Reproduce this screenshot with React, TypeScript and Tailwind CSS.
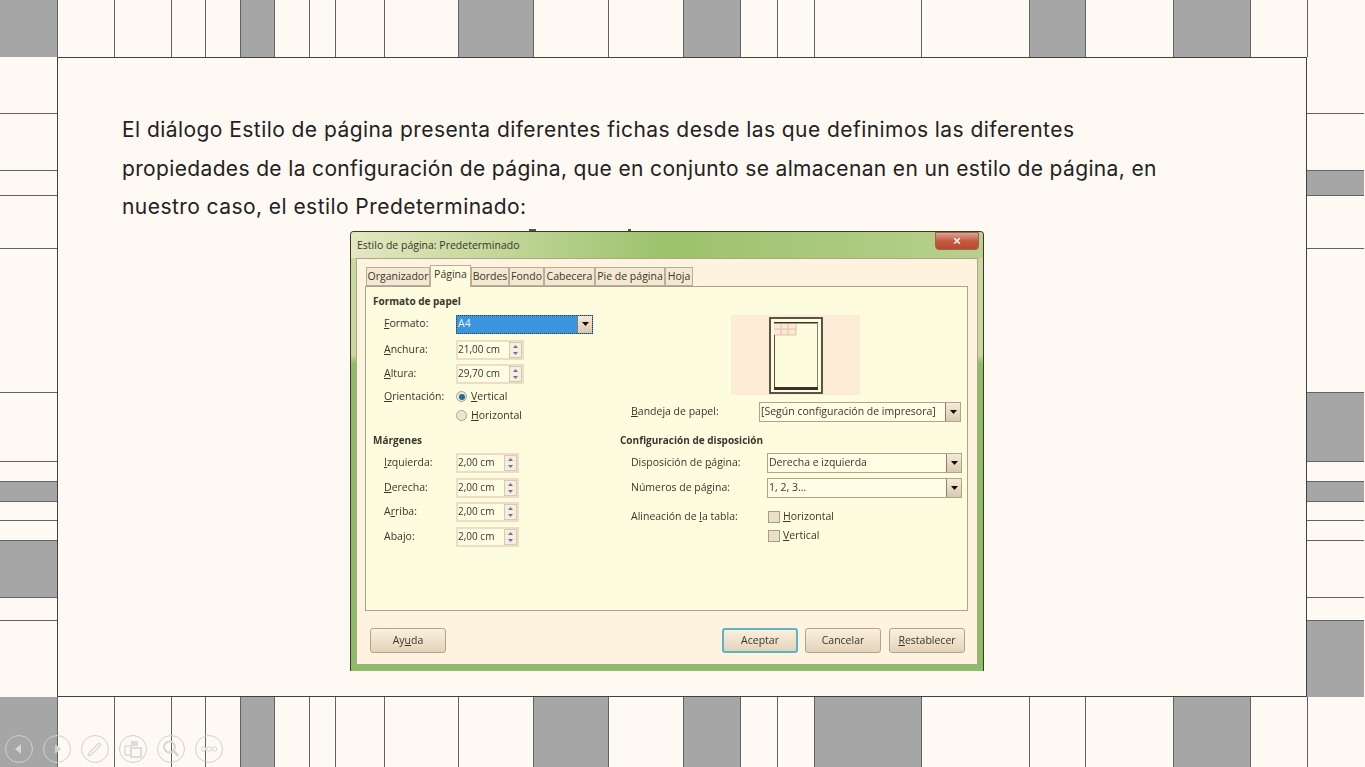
import type { ReactNode } from "react";

const topGray = [0, 5, 10, 13, 18, 20];
const bottomGray = [0, 5, 11, 13, 16, 20];
const columns = Array.from({ length: 23 }, (_, i) => i);
const leftRows = [
  false, false, false, false, false, false, false, true, false, false, true, false, false,
];
const rightRows = [
  false, false, true, false, false, true, false, true, false, false, false, false, true,
];

function Band({ gray }: { gray: number[] }) {
  return (
    <div className="grid h-full grid-cols-[58px_57px_57px_34px_35px_34px_35px_26px_49px_74px_75px_75px_75px_57px_37px_37px_107px_108px_56px_88px_77px_57px_57px]">
      {columns.map((c) => (
        <div
          key={c}
          className={`border-r border-[#5f6464] last:border-r-0 ${
            gray.includes(c) ? "bg-[#a6a6a6]" : ""
          }`}
        />
      ))}
    </div>
  );
}

function SideColumn({ rows }: { rows: boolean[] }) {
  return (
    <div className="grid h-full w-[57px] shrink-0 grid-rows-[57px_57px_25px_53px_144px_69px_20px_20px_19px_20px_57px_23px_76px]">
      {rows.map((gray, i) => (
        <div
          key={i}
          className={`border-b border-[#5f6464] last:border-b-0 ${gray ? "bg-[#a6a6a6]" : ""}`}
        />
      ))}
    </div>
  );
}

function Arrow() {
  return (
    <span className="flex h-full w-[15px] shrink-0 items-center justify-center border-l border-[#8d8068] bg-gradient-to-b from-[#f6ebd8] to-[#d9c8b0]">
      <svg width="7" height="4" viewBox="0 0 7 4">
        <path d="M0 0h7L3.5 4z" fill="#0f0d08" />
      </svg>
    </span>
  );
}

function Select({ className, children }: { className: string; children: ReactNode }) {
  return (
    <div
      className={`flex items-center justify-between border border-[#b0a48c] bg-[#fffde4] pl-[1px] ${className}`}
    >
      <span className="whitespace-nowrap">{children}</span>
      <Arrow />
    </div>
  );
}

function Spin({ value, className }: { value: string; className: string }) {
  return (
    <div
      className={`flex h-[20px] items-center justify-between border-2 border-[#efdcc4] bg-[#fffde4] text-[10px] ${className}`}
    >
      <span className="whitespace-nowrap">{value}</span>
      <span className="flex h-[16px] w-[13px] flex-col items-center justify-around border border-[#d8c8b4] bg-[#f8eedc]">
        <svg width="5" height="3" viewBox="0 0 5 3">
          <path d="M0 3h5L2.5 0z" fill="#6a70a8" />
        </svg>
        <svg width="5" height="3" viewBox="0 0 5 3">
          <path d="M0 0h5L2.5 3z" fill="#6a70a8" />
        </svg>
      </span>
    </div>
  );
}

function Label({ className, children }: { className: string; children: ReactNode }) {
  return <span className={`shrink-0 whitespace-nowrap ${className}`}>{children}</span>;
}

function Radio({ checked }: { checked?: boolean }) {
  return (
    <span className="flex size-[11px] items-center justify-center rounded-full border border-[#aaa28e] bg-[#ece6d2]">
      {checked && <span className="size-[6px] rounded-full bg-[#1f6d90]" />}
    </span>
  );
}

function Check() {
  return <span className="size-[12px] shrink-0 border border-[#a89c88] bg-[#eadfc9]" />;
}

function Button({ children, active }: { children: ReactNode; active?: boolean }) {
  return (
    <div
      className={`flex h-[25px] w-[76px] items-center justify-center rounded-[3px] bg-gradient-to-b from-[#fbf0de] to-[#e4d3ba] pt-[2px] text-[10.5px] ${
        active ? "border-2 border-[#5fb3c4]" : "border border-[#b0a68f]"
      }`}
    >
      {children}
    </div>
  );
}

function Tab({
  className,
  active,
  children,
}: {
  className: string;
  active?: boolean;
  children: ReactNode;
}) {
  return (
    <div
      className={`flex items-center justify-center self-end whitespace-nowrap border border-[#b9ae96] ${className} ${
        active
          ? "z-10 -mb-[1px] h-[22px] border-b-0 bg-[#fefcdf] pb-[2px]"
          : "h-[19px] bg-[#f4e8d2] pt-[2px]"
      }`}
    >
      {children}
    </div>
  );
}

function PaperDialog() {
  return (
    <div className="relative ml-[292px] mt-[3px] w-[634px]">
      <span className="absolute -top-[2px] left-[179px] h-[2px] w-[7px] bg-[#55524a]" />
      <span className="absolute -top-[2px] left-[278px] h-[2px] w-[3px] bg-[#55524a]" />
      <div className="flex h-[440px] flex-col overflow-hidden rounded-t-[4px] border-t border-l border-r border-[#3b3a25] bg-gradient-to-b from-[#c9d8a0] from-28% to-[#8dbd68] to-30% font-['Open_Sans',sans-serif] text-[10.5px] text-[#38362a] blur-[0.5px]">
        <div className="relative flex h-[26px] shrink-0 items-center bg-gradient-to-r from-[#e4e8c0] via-[#9cc26c] via-50% to-[#b8d08c] pl-[6px] pt-[3px]">
          Estilo de página: Predeterminado
          <span className="absolute right-[4px] top-0 flex h-[18px] w-[44px] items-center justify-center rounded-b-[4px] border border-[#a0604c] bg-gradient-to-b from-[#d8a494] via-[#c65a3c] to-[#b84a34] text-[15px] font-bold leading-none text-[#eeeeee]">
            ×
          </span>
        </div>
        <div className="mx-[5px] mb-[6px] flex grow flex-col border border-[#a8a888] bg-[#fdf3df] pl-[8px] pr-[9px]">
          <div className="flex h-[27px] shrink-0 pl-[1px]">
            <Tab className="w-[64px]">Organizador</Tab>
            <Tab className="w-[41px]" active>
              Página
            </Tab>
            <Tab className="w-[38px]">Bordes</Tab>
            <Tab className="w-[35px]">Fondo</Tab>
            <Tab className="w-[51px]">Cabecera</Tab>
            <Tab className="w-[70px]">Pie de página</Tab>
            <Tab className="w-[28px]">Hoja</Tab>
          </div>
          <div className="flex h-[325px] shrink-0 border border-[#a8a48c] bg-[#fefcdf]">
            <div className="flex w-[254px] shrink-0 flex-col pl-[7px] pt-[5px]">
              <div className="flex h-[20px] items-center text-[10px] font-bold">Formato de papel</div>
              <div className="mt-[3px] flex h-[19px] items-center pl-[11px]">
                <Label className="w-[72px]">
                  <u>F</u>ormato:
                </Label>
                <div className="flex h-full w-[137px] items-center justify-between border border-dotted border-[#3c3a30] bg-[#3a94de] pl-[1px] text-[#e8f2f8]">
                  A4
                  <Arrow />
                </div>
              </div>
              <div className="mt-[6px] flex h-[20px] items-center pl-[11px]">
                <Label className="w-[72px]">
                  <u>A</u>nchura:
                </Label>
                <Spin value="21,00 cm" className="w-[68px]" />
              </div>
              <div className="mt-[4px] flex h-[20px] items-center pl-[11px]">
                <Label className="w-[72px]">
                  <u>A</u>ltura:
                </Label>
                <Spin value="29,70 cm" className="w-[68px]" />
              </div>
              <div className="mt-[4px] flex h-[18px] items-center pl-[11px]">
                <Label className="w-[72px]">
                  <u>O</u>rientación:
                </Label>
                <span className="flex items-center gap-[4px]">
                  <Radio checked />
                  <span>
                    <u>V</u>ertical
                  </span>
                </span>
              </div>
              <div className="mt-[1px] flex h-[18px] items-center pl-[83px]">
                <span className="flex items-center gap-[4px]">
                  <Radio />
                  <span>
                    <u>H</u>orizontal
                  </span>
                </span>
              </div>
              <div className="mt-[6px] flex h-[20px] items-center text-[10px] font-bold">Márgenes</div>
              <div className="mt-[2px] flex h-[20px] items-center pl-[11px]">
                <Label className="w-[72px]">
                  <u>I</u>zquierda:
                </Label>
                <Spin value="2,00 cm" className="w-[63px]" />
              </div>
              <div className="mt-[5px] flex h-[20px] items-center pl-[11px]">
                <Label className="w-[72px]">
                  <u>D</u>erecha:
                </Label>
                <Spin value="2,00 cm" className="w-[63px]" />
              </div>
              <div className="mt-[4px] flex h-[20px] items-center pl-[11px]">
                <Label className="w-[72px]">
                  A<u>r</u>riba:
                </Label>
                <Spin value="2,00 cm" className="w-[63px]" />
              </div>
              <div className="mt-[5px] flex h-[20px] items-center pl-[11px]">
                <Label className="w-[72px]">
                  Aba<u>j</u>o:
                </Label>
                <Spin value="2,00 cm" className="w-[63px]" />
              </div>
            </div>
            <div className="flex grow flex-col pt-[28px]">
              <div className="ml-[111px] flex h-[80px] w-[129px] justify-center bg-[#fdecd6] pt-[2px]">
                <div className="flex h-[77px] w-[54px] flex-col border-2 border-[#5c5246] bg-[#fefcdf] px-[3px] pt-[3px]">
                  <svg width="44" height="70" viewBox="0 0 44 70">
                    <path d="M0 0.5h44" stroke="#3a3226" strokeWidth="2" />
                    <path d="M0 2h22v11H0z" fill="#fbe9d4" />
                    <path
                      d="M0 7h22M7 2v11M14 2v11M22 2v11M0 13h22"
                      stroke="#e0bfa8"
                      strokeWidth="1"
                      fill="none"
                    />
                    <path d="M0.5 13v54" stroke="#5c5246" strokeWidth="1" />
                    <path d="M43.5 2v66" stroke="#8a8072" strokeWidth="1" />
                    <path d="M0 66.5h44" stroke="#3a3226" strokeWidth="3" />
                  </svg>
                </div>
              </div>
              <div className="mt-[7px] flex h-[20px] items-center pl-[11px]">
                <Label className="w-[128px]">
                  <u>B</u>andeja de papel:
                </Label>
                <Select className="h-full w-[202px]">[Según configuración de impresora]</Select>
              </div>
              <div className="mt-[9px] flex h-[20px] items-center text-[10px] font-bold">
                Configuración de disposición
              </div>
              <div className="mt-[2px] flex h-[20px] items-center pl-[11px]">
                <Label className="w-[136px]">
                  Disposición de <u>p</u>ágina:
                </Label>
                <Select className="h-full w-[195px]">Derecha e izquierda</Select>
              </div>
              <div className="mt-[5px] flex h-[20px] items-center pl-[11px]">
                <Label className="w-[136px]">Números de página:</Label>
                <Select className="h-full w-[195px]">1, 2, 3...</Select>
              </div>
              <div className="mt-[10px] flex h-[19px] items-center pl-[11px]">
                <Label className="w-[137px]">
                  Alineación de <u>l</u>a tabla:
                </Label>
                <Check />
                <span className="ml-[3px]">
                  <u>H</u>orizontal
                </span>
              </div>
              <div className="flex h-[19px] items-center pl-[148px]">
                <Check />
                <span className="ml-[3px]">
                  <u>V</u>ertical
                </span>
              </div>
            </div>
          </div>
          <div className="mt-[17px] flex gap-[7px] pl-[5px] pr-[3px]">
            <div className="mr-auto">
              <Button>
                <span>
                  Ay<u>u</u>da
                </span>
              </Button>
            </div>
            <Button active>Aceptar</Button>
            <Button>Cancelar</Button>
            <div className="ml-[1px]">
              <Button>
                <span>
                  <u>R</u>establecer
                </span>
              </Button>
            </div>
          </div>
        </div>
      </div>
    </div>
  );
}

function CircleIcon({ children }: { children: ReactNode }) {
  return (
    <svg width="28" height="28" viewBox="0 0 28 28" fill="none">
      <circle cx="14" cy="14" r="13.5" stroke="#cfcfcf" strokeWidth="1" />
      {children}
    </svg>
  );
}

function SlideControls() {
  return (
    <div className="absolute bottom-[4px] left-[5px] flex gap-[10px]">
      <CircleIcon>
        <path d="M16 9v10l-6-5z" fill="#d6d6d6" />
      </CircleIcon>
      <CircleIcon>
        <path d="M12.5 10v8l5-4z" fill="#d0d0d0" stroke="#d0d0d0" />
      </CircleIcon>
      <CircleIcon>
        <path d="M7 21l1-3L18 8l2 2L10 20z" stroke="#d6d6d6" strokeWidth="1.2" strokeLinejoin="round" />
      </CircleIcon>
      <CircleIcon>
        <rect x="6" y="11" width="6" height="9" stroke="#dcdcdc" strokeWidth="1.5" />
        <rect x="12" y="6" width="7" height="5" fill="#dcdcdc" />
        <rect x="12" y="13" width="10" height="9" stroke="#dcdcdc" strokeWidth="2" />
      </CircleIcon>
      <CircleIcon>
        <circle cx="12.5" cy="12" r="5.5" stroke="#d6d6d6" strokeWidth="2" />
        <path d="M16.5 16l5 5" stroke="#d6d6d6" strokeWidth="2.5" />
      </CircleIcon>
      <CircleIcon>
        <circle cx="8.5" cy="14" r="2.2" stroke="#d6d6d6" />
        <circle cx="14" cy="14" r="2.2" stroke="#d6d6d6" />
        <circle cx="19.5" cy="14" r="2.2" stroke="#d6d6d6" />
      </CircleIcon>
    </div>
  );
}

export default function App() {
  return (
    <div className="relative flex h-[767px] w-[1365px] flex-col overflow-hidden bg-[#fff9f3]">
      <div className="h-[57px] shrink-0">
        <Band gray={topGray} />
      </div>
      <div className="flex h-[640px] shrink-0">
        <SideColumn rows={leftRows} />
        <div className="w-[1250px] shrink-0 border border-[#3f4242]">
          <p className="pl-[64px] pt-[53px] font-['Inter',sans-serif] text-[21px] leading-[38.5px] tracking-[0.44px] text-[#222222]">
            <span className="block whitespace-nowrap">
              El diálogo Estilo de página presenta diferentes fichas desde las que definimos las diferentes
            </span>
            <span className="block whitespace-nowrap tracking-[0.35px]">
              propiedades de la configuración de página, que en conjunto se almacenan en un estilo de página, en
            </span>
            <span className="block whitespace-nowrap">nuestro caso, el estilo Predeterminado:</span>
          </p>
          <div className="pt-[1px]">
            <PaperDialog />
          </div>
        </div>
        <SideColumn rows={rightRows} />
      </div>
      <div className="h-[70px] shrink-0">
        <Band gray={bottomGray} />
      </div>
      <SlideControls />
    </div>
  );
}
